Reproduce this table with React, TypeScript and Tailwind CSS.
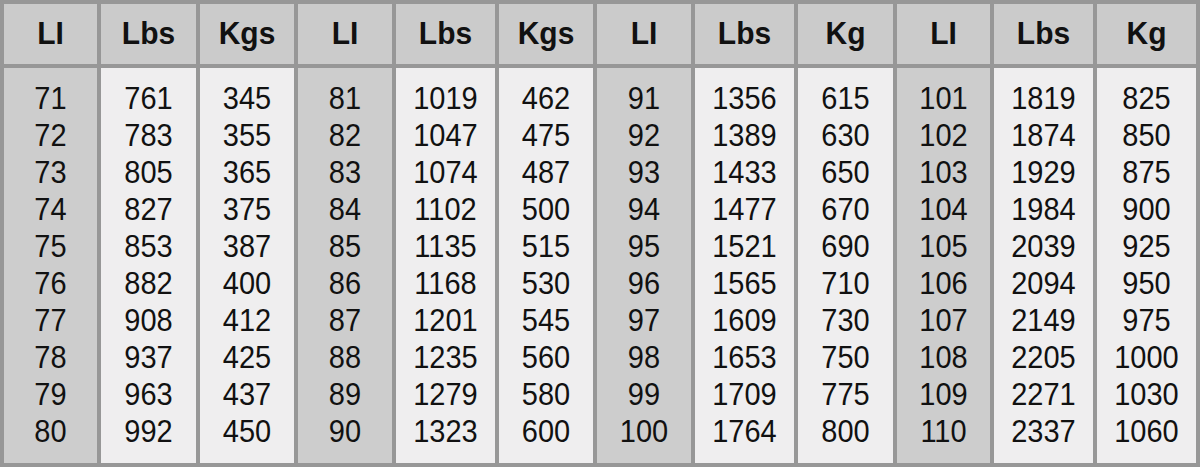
import { Fragment } from "react";

const groups = [
  {
    li: [71, 72, 73, 74, 75, 76, 77, 78, 79, 80],
    lbs: [761, 783, 805, 827, 853, 882, 908, 937, 963, 992],
    kg: [345, 355, 365, 375, 387, 400, 412, 425, 437, 450],
    kgLabel: "Kgs",
  },
  {
    li: [81, 82, 83, 84, 85, 86, 87, 88, 89, 90],
    lbs: [1019, 1047, 1074, 1102, 1135, 1168, 1201, 1235, 1279, 1323],
    kg: [462, 475, 487, 500, 515, 530, 545, 560, 580, 600],
    kgLabel: "Kgs",
  },
  {
    li: [91, 92, 93, 94, 95, 96, 97, 98, 99, 100],
    lbs: [1356, 1389, 1433, 1477, 1521, 1565, 1609, 1653, 1709, 1764],
    kg: [615, 630, 650, 670, 690, 710, 730, 750, 775, 800],
    kgLabel: "Kg",
  },
  {
    li: [101, 102, 103, 104, 105, 106, 107, 108, 109, 110],
    lbs: [1819, 1874, 1929, 1984, 2039, 2094, 2149, 2205, 2271, 2337],
    kg: [825, 850, 875, 900, 925, 950, 975, 1000, 1030, 1060],
    kgLabel: "Kg",
  },
];

function HeaderCell({ label }: { label: string }) {
  return (
    <div className="bg-[#cbcbcb] flex items-center justify-center">
      <span className="inline-block scale-y-105 text-[30px] font-bold leading-none">
        {label}
      </span>
    </div>
  );
}

function BodyCell({ values, dark }: { values: number[]; dark?: boolean }) {
  return (
    <div className={`${dark ? "bg-[#cdcdcd]" : "bg-[#efeeef]"} flex flex-col items-center pt-[12px]`}>
      {values.map((v) => (
        <div key={v} className="h-[37px] flex items-center justify-center">
          <span className="inline-block scale-y-110 text-[29px] leading-none">{v}</span>
        </div>
      ))}
    </div>
  );
}

export default function App() {
  return (
    <div className="w-[1200px] h-[467px] bg-[#979797] p-[4px] grid grid-cols-[93px_95px_94px_94px_99px_94px_94px_99px_95px_93px_99px_99px] grid-rows-[60px_1fr] gap-[4px] text-[#111] overflow-hidden font-['Liberation_Sans',Arial,sans-serif]">
      {groups.map((g, i) => (
        <Fragment key={`h${i}`}>
          <HeaderCell label="LI" />
          <HeaderCell label="Lbs" />
          <HeaderCell label={g.kgLabel} />
        </Fragment>
      ))}
      {groups.map((g, i) => (
        <Fragment key={`b${i}`}>
          <BodyCell values={g.li} dark />
          <BodyCell values={g.lbs} />
          <BodyCell values={g.kg} />
        </Fragment>
      ))}
    </div>
  );
}
